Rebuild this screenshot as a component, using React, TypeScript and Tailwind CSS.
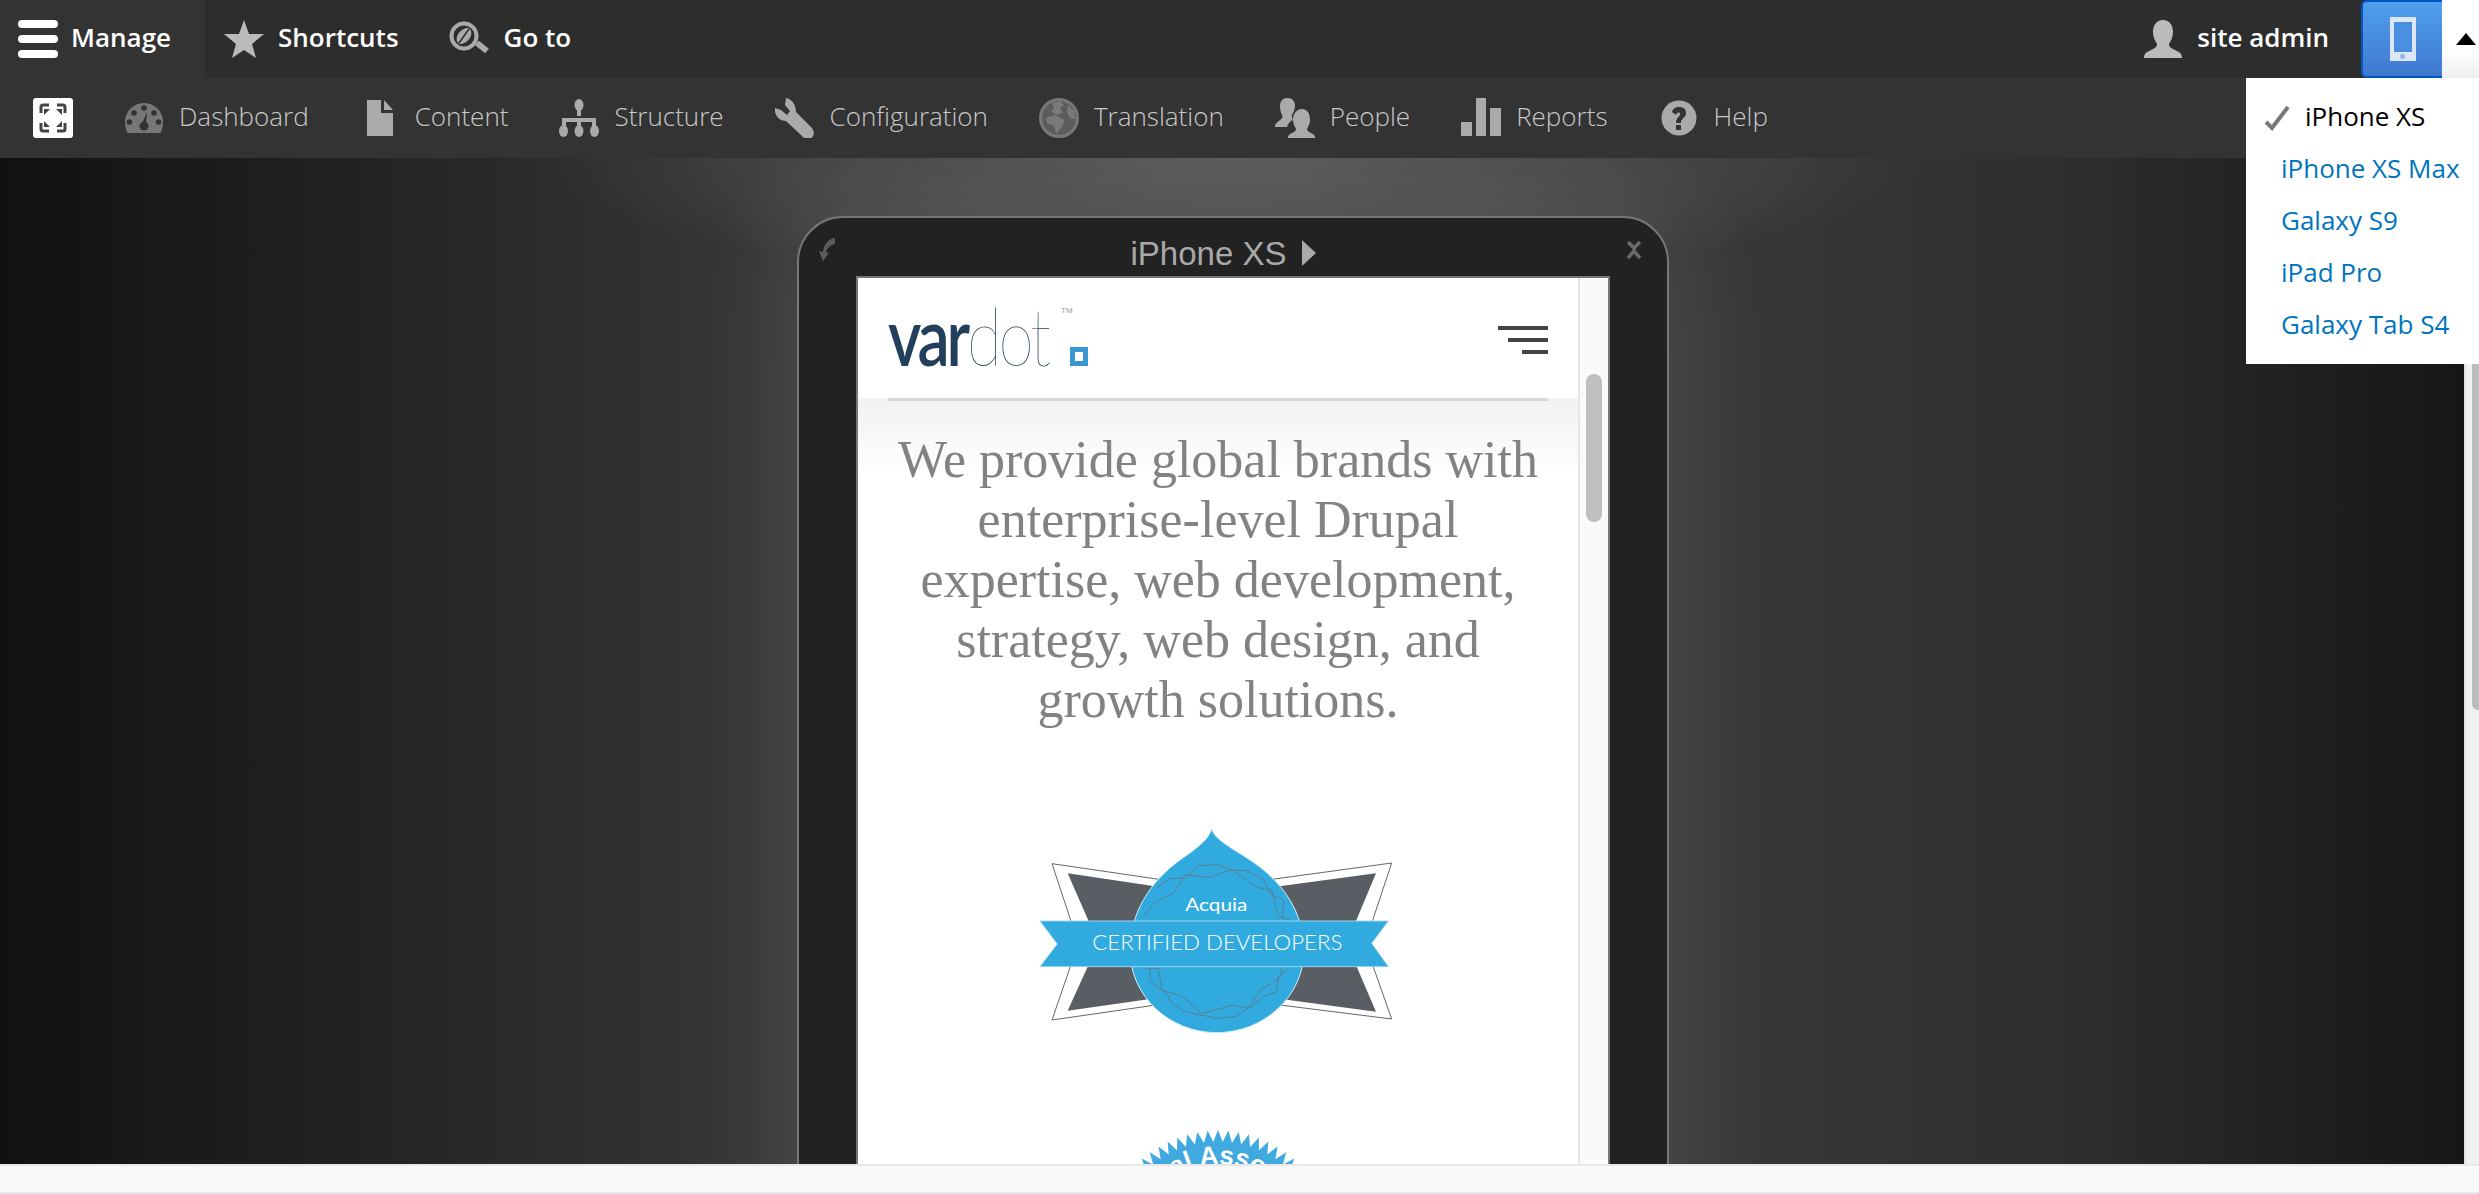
import type { ReactNode } from "react";

const toolbarItems: { label: string; icon: ReactNode }[] = [
  {
    label: "Dashboard",
    icon: (
      <>
        <path d="M20 5C9 5 1 14 1 24c0 4 1 7 2 10a2 2 0 0 0 1 1h32a2 2 0 0 0 1-1c1-3 2-6 2-10C39 14 31 5 20 5z" fill="#777" />
        <circle cx="10" cy="15" r="2.8" fill="#333" />
        <circle cx="20" cy="10" r="2.8" fill="#333" />
        <circle cx="30" cy="15" r="2.8" fill="#333" />
        <circle cx="5.5" cy="24" r="2.8" fill="#333" />
        <circle cx="34.5" cy="24" r="2.8" fill="#333" />
        <circle cx="20" cy="28" r="4.5" fill="#333" />
        <path d="M18 26l5-12-1 14z" fill="#333" />
      </>
    ),
  },
  {
    label: "Content",
    icon: <path d="M7 2h14v13h12v23H7zM24 2l9 10h-9z" fill="#aaa" />,
  },
  {
    label: "Structure",
    icon: (
      <>
        <path d="M20 10v8M5 33V22h30v11M20 22v11" stroke="#aaa" strokeWidth="4" fill="none" />
        <ellipse cx="20" cy="7" rx="4.5" ry="6" fill="#aaa" />
        <ellipse cx="4.5" cy="33" rx="4.5" ry="6" fill="#aaa" />
        <ellipse cx="20" cy="33" rx="4.5" ry="6" fill="#aaa" />
        <ellipse cx="35.5" cy="33" rx="4.5" ry="6" fill="#aaa" />
      </>
    ),
  },
  {
    label: "Configuration",
    icon: (
      <path
        d="M11 0l-1 7 5 6-3 4-6-5-6-2c-1 7 4 13 11 13l17 16c2 2 8 3 10-1 2-3 0-7-2-9L21 14C21 7 17 1 11 0z"
        fill="#aaa"
      />
    ),
  },
  {
    label: "Translation",
    icon: (
      <>
        <circle cx="20" cy="20" r="18.5" fill="#5c5c5c" stroke="#787878" strokeWidth="3" />
        <path d="M13 5l9-2 3 4-4 3 3 5-7 2-5-4 3-3zM7 20l9-3 10 5-3 7-6 7-2-8-7-3z" fill="#7a7a7a" />
        <path d="M29 7l6 6 2 8-6-1-3-6z" fill="#7a7a7a" />
      </>
    ),
  },
  {
    label: "People",
    icon: (
      <>
        <path d="M13 0c4 0 7 3 7 8 0 4-2 7-3 9 0 3 0 4 1 5-3 1-5 4-6 7H0c0-4 3-5 5-7 2-1 3-3 2-5-1-2-2-5-2-9 0-5 3-8 7-8z" fill="#aaa" />
        <path d="M27 11c5 0 8 4 8 11 0 4-2 7-3 9 0 2 2 3 4 4 2 1 4 2 4 4v1H13v-1c0-2 2-3 4-4 2-1 4-2 4-4-1-2-3-5-3-9 0-7 4-11 9-11z" fill="#aaa" />
      </>
    ),
  },
  {
    label: "Reports",
    icon: <path d="M0 24h11v14H0zM15 0h10v38H15zM29 10h11v28H29z" fill="#aaa" />,
  },
  {
    label: "Help",
    icon: (
      <>
        <circle cx="20" cy="20" r="17.5" fill="#aaa" />
        <path d="M13 14c1-4 4-5 7-5 4 0 7 2 7 6 0 5-5 5-5 10h-5c0-6 4-6 4-9 0-2-3-2-4 1z" fill="#333" />
        <rect x="17" y="27" width="5" height="5" fill="#333" />
      </>
    ),
  },
];

const devices = ["iPhone XS Max", "Galaxy S9", "iPad Pro", "Galaxy Tab S4"];

// spiky edge of the second badge
const sealPoints = Array.from({ length: 140 }, (_, i) => {
  const r = i % 2 === 0 ? 116 : 104;
  const a = (i / 140) * Math.PI * 2;
  return `${(150 + r * Math.sin(a)).toFixed(1)},${(120 - r * Math.cos(a)).toFixed(1)}`;
}).join(" ");

function Icon({ children, className = "w-10 h-10" }: { children: ReactNode; className?: string }) {
  return (
    <svg viewBox="0 0 40 40" className={`${className} shrink-0`} aria-hidden="true">
      {children}
    </svg>
  );
}

function AcquiaBadge() {
  return (
    <svg viewBox="114 75 1080 630" width="360" height="210" className="mx-auto block" role="img" aria-label="Acquia Certified Developers">
      <polygon points="156,191 640,262 1175,189 1095,430 1175,657 640,590 156,660 235,430" fill="#fff" stroke="#666" strokeWidth="3" />
      <polygon points="203,220 640,285 1128,220 1040,430 1128,635 640,570 203,632 295,430" fill="#585e64" />
      <path
        d="M635 85C642 118 690 140 750 180C850 245 912 340 912 450C912 590 790 698 650 698C510 698 390 590 390 450C390 340 450 245 540 180C590 145 628 118 635 85Z"
        fill="#31abdf"
        stroke="#d5eef9"
        strokeWidth="3"
      />
      <g fill="none" stroke="#5b7f93" strokeWidth="3">
        <polyline points="470,265 510,235 555,235 595,198 650,193 695,210 740,212 790,238 815,285 850,300 848,355" />
        <polyline points="430,350 458,315 470,305 520,280 555,225 630,232 695,208 770,262 815,270 835,350 870,360" />
        <polyline points="440,505 475,505 485,570 550,590 605,640 700,615 745,625 780,570 840,535 845,505" />
        <polyline points="450,505 450,545 500,580 515,610 555,635 650,655 705,650 745,625 800,585 830,575 835,530 865,505" />
      </g>
      <polygon points="120,363 1165,363 1115,430 1165,500 120,500 172,432" fill="#31abdf" stroke="#9fd6ef" strokeWidth="3" />
      <text x="649" y="333" textAnchor="middle" fontSize="50" fill="#fff" textLength="186" lengthAdjust="spacingAndGlyphs" fontFamily="Lato, sans-serif" fontWeight="400">
        Acquia
      </text>
      <text x="652" y="450" textAnchor="middle" fontSize="66" fill="#fff" textLength="750" lengthAdjust="spacingAndGlyphs" fontFamily="Lato, sans-serif" fontWeight="300">
        CERTIFIED DEVELOPERS
      </text>
    </svg>
  );
}

function AssociationSeal() {
  return (
    <svg viewBox="0 0 300 240" width="300" height="240" className="mx-auto mt-[91px] block" aria-hidden="true">
      <polygon points={sealPoints} fill="#3fa9e0" />
      <defs>
        <path id="seal-arc" d="M68 120a82 82 0 0 1 164 0" />
      </defs>
      <text fontSize="26" fontWeight="700" fill="#fff" fontFamily="'Liberation Sans', sans-serif">
        <textPath href="#seal-arc" startOffset="22">
          Drupal Association
        </textPath>
      </text>
    </svg>
  );
}

function DeviceFrame() {
  return (
    <div className="ml-[2px] mt-[58px] h-[1100px] w-[872px] shrink-0 rounded-t-[46px] border-2 border-[#777] bg-[#222] shadow-[0_0_120px_rgba(255,255,255,0.13)]">
      <div className="flex h-[58px] items-center justify-between pl-4 pr-[25px] pt-[6px]">
        <svg viewBox="0 0 22 26" className="h-[26px] w-[22px]" aria-hidden="true">
          <path d="M20 1c-7 1-11 6-12 14l-4-1 4 10 6-8-3-1c1-4 4-7 9-8z" fill="#5c5c5c" />
        </svg>
        <div className="flex items-center gap-4 pr-[16px] pt-[6px] font-['Liberation_Sans',sans-serif] text-[33px] leading-none text-[#a9a9a9]">
          iPhone XS
          <span className="h-0 w-0 border-y-[13px] border-l-[14px] border-y-transparent border-l-[#a9a9a9]" />
        </div>
        <svg viewBox="0 0 16 18" className="h-[18px] w-4" aria-hidden="true">
          <path d="M2 1l6 6 6-6M2 17l6-7 6 7M8 7v3" stroke="#6a6a6a" strokeWidth="3.5" fill="none" />
        </svg>
      </div>
      <div className="ml-[57px] flex h-full w-[754px] border-x-2 border-t-2 border-[#777] bg-white">
        <div className="w-[720px]">
          <div className="relative h-[120px]">
            <span className="absolute left-[30px] top-[17px] origin-left scale-x-[0.8] font-['Lato',sans-serif] text-[80px] leading-none tracking-[-4px] text-[#22405c]">
              <span className="font-semibold">var</span>
              <span className="font-extralight">dot</span>
            </span>
            <span className="absolute left-[203px] top-[29px] font-['Liberation_Sans',sans-serif] text-[8px] leading-none text-[#999]">TM</span>
            <span className="absolute left-[212px] top-[69px] h-[19px] w-[18px] border-[5px] border-[#3a97d4] bg-white" />
            <div className="absolute right-[30px] top-[48px] flex flex-col items-end gap-2">
              <span className="h-1 w-[50px] bg-[#444]" />
              <span className="h-1 w-10 bg-[#444]" />
              <span className="h-1 w-[26px] bg-[#444]" />
            </div>
          </div>
          <div className="bg-[linear-gradient(#f2f2f2,#ffffff_80px)]">
            <div className="mx-[30px] h-[3px] bg-[#d6d8da]" />
            <h1 className="pt-[29px] text-center font-['Liberation_Serif',serif] text-[52px] leading-[60px] font-normal text-[#828282]">
              We provide global brands with
              <br />
              enterprise-level Drupal
              <br />
              expertise, web development,
              <br />
              strategy, web design, and
              <br />
              growth solutions.
            </h1>
          </div>
          <div className="mt-[95px]">
            <AcquiaBadge />
          </div>
          <AssociationSeal />
        </div>
        <div className="w-[30px] border-l-2 border-[#e6e6e6] bg-[#fafafa]">
          <div className="ml-[6px] mt-[96px] h-[148px] w-4 rounded-full bg-[#bfbfbf]" />
        </div>
      </div>
    </div>
  );
}

export default function App() {
  return (
    <div className="relative flex h-screen flex-col overflow-hidden font-['Open_Sans',sans-serif]">
      <header className="flex h-[78px] shrink-0 items-center bg-[#2d2d2d] text-[26px] font-semibold text-white">
        <div className="flex h-full w-[205px] items-center gap-[13px] bg-[#333] pl-[18px]">
          <div className="flex h-[38px] w-10 flex-col justify-between">
            <span className="h-2 rounded-sm bg-white" />
            <span className="h-2 rounded-sm bg-white" />
            <span className="h-2 rounded-sm bg-white" />
          </div>
          <span className="pb-[3px]">Manage</span>
        </div>
        <div className="ml-[19px] flex items-center gap-[14px]">
          <Icon>
            <path d="M20 1l5 14h15L28 25l4 14-12-8-12 8 4-14L0 15h15z" fill="#bbb" />
          </Icon>
          <span className="pb-[3px]">Shortcuts</span>
        </div>
        <div className="ml-[50px] flex items-center gap-[15px]">
          <Icon>
            <circle cx="15" cy="17" r="12.5" fill="none" stroke="#aaa" strokeWidth="4" />
            <ellipse cx="15" cy="17" rx="6" ry="9" transform="rotate(40 15 17)" fill="#aaa" />
            <path d="M20 10l-10 14" stroke="#2d2d2d" strokeWidth="1.5" />
            <path d="M28 24l10 8" stroke="#aaa" strokeWidth="6" />
          </Icon>
          <span className="pb-[3px]">Go to</span>
        </div>
        <div className="ml-auto flex items-center gap-[14px]">
          <Icon>
            <path d="M20 1c7 0 10 6 10 12 0 5-2 9-4 12 0 3 2 4 6 6 4 2 7 3 7 8H1c0-5 3-6 7-8 4-2 6-3 6-6-2-3-4-7-4-12C10 7 13 1 20 1z" fill="#bbb" />
          </Icon>
          <span className="pb-[3px]">site admin</span>
        </div>
        <div className="ml-8 flex h-full w-[81px] items-center justify-center rounded-l-md border-2 border-r-0 border-[#0058c7] bg-[linear-gradient(#50a0ec,#3f78cf)]">
          <div className="h-11 w-[26px] bg-[#dbe6f6] px-1 pt-[5px]">
            <div className="h-[30px] bg-[#4a8fe0]" />
            <div className="mx-auto mt-[2px] h-[5px] w-[5px] rounded-full bg-[#8fb6ea]" />
          </div>
        </div>
        <div className="flex h-full w-[37px] items-center justify-end bg-[linear-gradient(#ffffff_60%,#f0f0f0)] pr-[3px]">
          <span className="mt-[-1px] h-0 w-0 border-x-[10px] border-b-[12px] border-x-transparent border-b-black" />
        </div>
      </header>

      <nav className="flex h-20 shrink-0 items-center gap-[51px] bg-[#333] pl-[33px] text-[26px] font-light text-[#c8c8c8]">
        <span className="flex h-10 w-10 items-center justify-center rounded-[3px] bg-white">
          <svg viewBox="0 0 40 40" className="h-10 w-10" aria-hidden="true">
            <path d="M8 15V9a2 2 0 0 1 2-2h6M24 7h6a2 2 0 0 1 2 2v6M8 25v6a2 2 0 0 0 2 2h6M24 33h6a2 2 0 0 0 2-2v-6" fill="none" stroke="#444" strokeWidth="3" />
            <path d="M11 11h6l-6 6zM29 11h-6l6 6zM11 29h6l-6-6zM29 29h-6l6-6z" fill="#444" />
          </svg>
        </span>
        {toolbarItems.map((item) => (
          <div key={item.label} className="flex items-center gap-[15px]">
            <Icon>{item.icon}</Icon>
            <span className="pb-1">{item.label}</span>
          </div>
        ))}
      </nav>

      <main className="flex min-h-0 flex-1">
        <div className="flex min-w-0 flex-1 justify-center overflow-hidden bg-[radial-gradient(ellipse_700px_130px_at_50%_0,rgba(255,255,255,0.17),transparent),linear-gradient(to_right,#111111,#2c2c2c_22%,#383838_32%,#383838_70%,#2e2e2e_84%,#161616)]">
          <DeviceFrame />
        </div>
        <div className="w-[15px] shrink-0 border-l-2 border-[#e2e2e2] bg-[#f1f1f1] pl-[6px]">
          <div className="h-[552px] rounded-bl-md bg-[#bcbcbc]" />
        </div>
      </main>

      <footer className="h-[30px] shrink-0 border-y-2 border-y-[#e8e8e8] bg-[#f9f9f9]" />

      <div className="absolute right-0 top-[78px] w-[233px] bg-white pb-[13px] pl-[35px] pt-[13px] text-[26px] leading-none text-[#0074bd]">
        <div className="relative flex h-[52px] items-center pb-[3px] pl-[24px] text-black">
          <svg viewBox="0 0 26 26" className="absolute left-[-17px] top-[14px] h-[26px] w-[26px]" aria-hidden="true">
            <path d="M2 17l6 6L24 2" fill="none" stroke="#777" strokeWidth="4" />
          </svg>
          iPhone XS
        </div>
        {devices.map((name) => (
          <div key={name} className="flex h-[52px] items-center whitespace-nowrap pb-[3px]">
            {name}
          </div>
        ))}
      </div>
    </div>
  );
}
